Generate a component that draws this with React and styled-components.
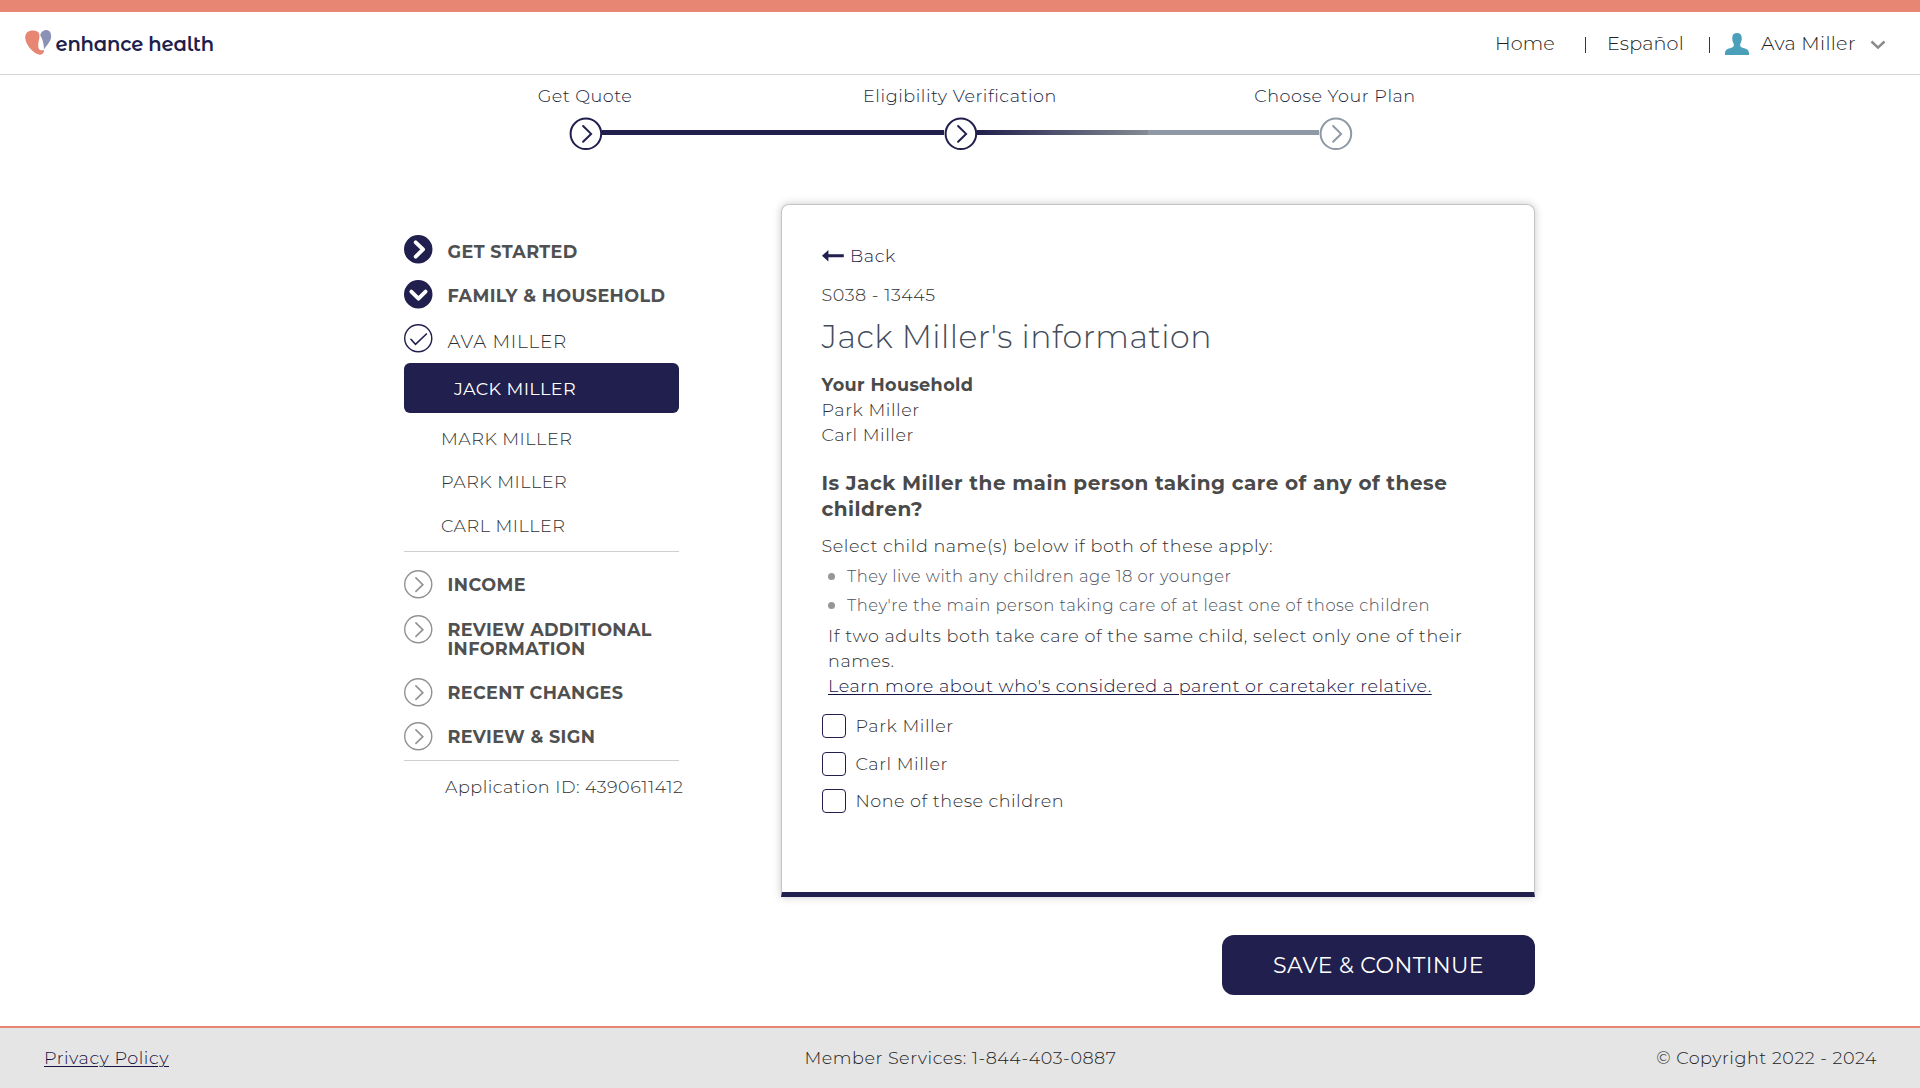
import React from "react";
import styled, { createGlobalStyle } from "styled-components";

const navy = "#211f4d";
const slate = "#8e99a5";

const GlobalStyle = createGlobalStyle`
  * { box-sizing: border-box; }
  body { margin: 0; background: #fff; font-family: Montserrat, Inter, "Open Sans", sans-serif; }
  svg { display: block; flex: none; overflow: visible; }
`;

const Page = styled.div`
  display: flex;
  flex-direction: column;
  min-height: 1088px;
`;

const Text = styled.div`
  font-size: ${(p) => p.$size || 17.6}px;
  font-weight: ${(p) => p.$weight || 300};
  letter-spacing: ${(p) => p.$track ?? 0.55}px;
  line-height: ${(p) => p.$line || 25}px;
  color: ${(p) => p.$color || "#303030"};
  white-space: nowrap;
`;

const TopBar = styled.div`
  height: 12px;
  background: #e78672;
`;

const Header = styled.header`
  height: 63px;
  display: flex;
  align-items: center;
  justify-content: space-between;
  padding: 1px 34px 0 25px;
  border-bottom: 1px solid #d8d8d8;
`;

const Brand = styled.div`
  display: flex;
  align-items: center;
  gap: 3.5px;
  padding-bottom: 1px;
`;

const BrandName = styled(Text)`
  font-family: "Montserrat Alternates", Montserrat, Inter, sans-serif;
  padding-top: 3px;
`;

const Nav = styled.nav`
  display: grid;
  grid-template-columns: 90px 22px 102px 16px 36px 109px 16px;
  align-items: center;
`;

const Pipe = styled.span`
  width: 1px;
  height: 16px;
  margin-top: 3px;
  background: #3a3050;
`;

const Stepper = styled.section`
  padding-top: 8px;
  display: flex;
  flex-direction: column;
  align-items: center;
  gap: 8px;
`;

const StepLabels = styled.div`
  display: grid;
  grid-template-columns: repeat(3, 375px);
  justify-items: center;
`;

const Track = styled.div`
  display: flex;
  align-items: flex-start;
  padding-left: 1px;
`;

const Segment = styled.div`
  width: 342px;
  height: 5px;
  margin-top: 13px;
  background: ${(p) => p.$fill};
`;

const Main = styled.main`
  display: flex;
  gap: 102px;
  padding: 54px 0 0 404px;
`;

const Sidebar = styled.aside`
  width: 275px;
  padding-top: 31px;
`;

const SideRow = styled.div`
  display: flex;
  align-items: flex-start;
  gap: 15px;
  height: ${(p) => p.$height}px;
`;

const SideLabel = styled(Text)`
  padding-top: ${(p) => p.$drop}px;
`;

const ActivePerson = styled.div`
  height: 50px;
  padding: 1px 0 0 50px;
  margin-bottom: 4px;
  border-radius: 6px;
  background: ${navy};
  display: flex;
  align-items: center;
`;

const Person = styled(Text)`
  padding-left: 37px;
`;

const Divider = styled.div`
  height: 1px;
  margin: ${(p) => p.$margin};
  background: #cfcfcf;
`;

const ApplicationId = styled(Text)`
  padding-left: 41px;
`;

const Content = styled.div`
  width: 754px;
  display: flex;
  flex-direction: column;
  align-items: flex-end;
  gap: 38px;
`;

const Card = styled.section`
  width: 100%;
  height: 693px;
  padding: 38px 40px 0;
  border: 1px solid #c4c4c4;
  border-bottom: 5px solid ${navy};
  border-radius: 8px 8px 0 0;
  box-shadow: 0 0 8px rgba(0, 0, 0, 0.22);
`;

const Back = styled.div`
  display: flex;
  align-items: center;
  gap: 6px;
`;

const CardText = styled(Text)`
  margin: ${(p) => p.$top || 0}px 0 0 ${(p) => p.$indent || -0.5}px;
`;

const LinkText = styled(CardText)`
  text-decoration: underline;
  text-underline-offset: 2px;
  text-decoration-thickness: 1px;
`;

const List = styled.ul`
  list-style: none;
  margin: 4px 0 3px;
  padding: 0 0 0 6px;
`;

const ListItem = styled.li`
  display: flex;
  align-items: center;
  gap: 12px;
  height: 29px;
`;

const Bullet = styled.span`
  width: 7px;
  height: 7px;
  border-radius: 50%;
  background: #969696;
`;

const Options = styled.div`
  display: flex;
  flex-direction: column;
  gap: 13.5px;
  margin-top: 16px;
`;

const Option = styled.label`
  display: flex;
  align-items: center;
  gap: 9.5px;
  height: 24px;
`;

const OptionText = styled(Text)`
  padding-bottom: 1px;
`;

const Checkbox = styled.span`
  width: 24px;
  height: 24px;
  border: 1px solid ${navy};
  border-radius: 4px;
`;

const SaveButton = styled.button`
  width: 313px;
  height: 60px;
  border: 0;
  padding: 0;
  border-radius: 12px;
  background: ${navy};
  font-family: inherit;
  display: flex;
  align-items: center;
  justify-content: center;
`;

const Footer = styled.footer`
  height: 62px;
  margin-top: 31px;
  padding: 0 43px 1px 44px;
  border-top: 2px solid #e78672;
  background: #e5e5e5;
  display: grid;
  grid-template-columns: 1fr auto 1fr;
  align-items: center;
`;

const FooterText = styled(Text)`
  justify-self: ${(p) => p.$side || "start"};
  text-decoration: ${(p) => (p.$link ? "underline" : "none")};
  text-underline-offset: 2px;
  text-decoration-thickness: 1px;
`;

const HeartLogo = () => (
  <svg width="27" height="26" viewBox="0 0 27 26">
    <path fill="#e78672" d="M.2 8C0 2.600 3.600.3 8.600.5c3.800.1 6 2.200 5.900 5.600-.1 3.400-1.800 7.600-1.200 11 .4 2.400 1.600 3.300 3 3.200 1.300 0 2.200-.6 2.800-.3-.1 2.900-1.700 5-4.400 4.700C8.300 24 .6 14.500.2 8Z" />
    <path fill="#8b90b7" d="M15.300 5.600C15.600 2.400 18.300.1 21.500.1c3.400.1 5.100 3.500 4.600 7.500-.7 4.800-4.700 7.700-7.100 12.200C19 14 17.600 9 15.300 5.600Z" />
  </svg>
);

const Avatar = () => (
  <svg width="24" height="22" viewBox="0 0 24 22">
    <path fill="#4a9fb9" d="M12 0c3 0 4.800 1.900 4.800 5.200 0 1.500-.3 3-.9 4.300-.5 1.200-.8 1.900-.7 3 .1 1.300 1 1.700 2.400 2.200 3.700 1.100 6.400 2 6.400 5.300V22H0v-2c0-3.300 2.700-4.200 6.400-5.300 1.400-.5 2.300-.9 2.400-2.200.1-1.100-.2-1.800-.7-3-.6-1.300-.9-2.800-.9-4.300C7.200 1.900 9 0 12 0Z" />
  </svg>
);

const CaretDown = () => (
  <svg width="16" height="8" viewBox="0 0 16 8">
    <path d="M1.500 1.500 8 7.600l6.500-6.100" fill="none" stroke="#8a8a8a" strokeWidth="2.500" />
  </svg>
);

const StepIcon = ({ color }) => (
  <svg width="33" height="33" viewBox="0 0 33 33" fill="none" stroke={color} strokeWidth="2">
    <circle cx="16.900" cy="16.800" r="15.300" />
    <path d="m14.100 9 8 7.900-8 7.900" strokeLinecap="round" />
  </svg>
);

const sideGlyphs = {
  next: "M11.500 7.200 18.700 14.200 11.500 21.200",
  open: "M7.200 11.400 14.200 18.300 21.200 11.400",
  done: "M6.800 15 11.300 20 22 9.800",
  idle: "M11.700 7.700 18.500 14.400 11.700 21",
};

const SideIcon = ({ kind }) => {
  const solid = kind === "next" || kind === "open";
  const line = kind === "idle" ? "#929292" : navy;
  return (
    <svg width="28.5" height="28.5" viewBox="0 0 28 28" fill="none">
      <circle cx="14" cy="14" r="13.300" stroke={line} strokeWidth="1.400" fill={solid ? navy : "none"} />
      <path
        d={sideGlyphs[kind]}
        stroke={solid ? "#fff" : line}
        strokeWidth={solid ? 3.8 : 1.6}
        strokeLinecap="round"
        strokeLinejoin={solid ? "round" : "miter"}
      />
    </svg>
  );
};

const BackArrow = () => (
  <svg width="22" height="12" viewBox="0 0 22 12">
    <path fill={navy} d="M0 5.700 6.400 0v4.200h15.400v3H6.400v4.300Z" />
  </svg>
);

const bold = { $weight: 700, $line: 19, $color: "#505050", $track: 0.38 };

export default function App() {
  return (
    <Page>
      <GlobalStyle />
      <TopBar />
      <Header>
        <Brand>
          <HeartLogo />
          <BrandName $size={19.5} $weight={600} $track={-0.2} $color={navy}>enhance health</BrandName>
        </Brand>
        <Nav>
          <Text $size={19.2} $track={0.1} $color="#222">Home</Text>
          <Pipe />
          <Text $size={19.2} $track={0.15} $color="#222">Español</Text>
          <Pipe />
          <Avatar />
          <Text $size={19.2} $track={0.35} $color="#222">Ava Miller</Text>
          <CaretDown />
        </Nav>
      </Header>

      <Stepper>
        <StepLabels>
          <Text $line={26} $track={0.5} $color="#1a1f3d">Get Quote</Text>
          <Text $line={26} $track={0.54} $color="#1a1f3d">Eligibility Verification</Text>
          <Text $line={26} $track={0.54} $color="#1a1f3d">Choose Your Plan</Text>
        </StepLabels>
        <Track>
          <StepIcon color={navy} />
          <Segment $fill={navy} />
          <StepIcon color={navy} />
          <Segment $fill={`linear-gradient(90deg, ${navy} 0%, #848b93 50%, ${slate} 50%)`} />
          <StepIcon color={slate} />
        </Track>
      </Stepper>

      <Main>
        <Sidebar>
          <SideRow $height={45}>
            <SideIcon kind="next" />
            <SideLabel {...bold} $drop={7}>GET STARTED</SideLabel>
          </SideRow>
          <SideRow $height={44}>
            <SideIcon kind="open" />
            <SideLabel {...bold} $drop={6}>FAMILY &amp; HOUSEHOLD</SideLabel>
          </SideRow>
          <SideRow $height={39}>
            <SideIcon kind="done" />
            <SideLabel $size={18.4} $line={19} $drop={7.5} $track={0.75}>AVA MILLER</SideLabel>
          </SideRow>
          <ActivePerson>
            <Text $weight={400} $color="#fff" $track={0.38}>JACK MILLER</Text>
          </ActivePerson>
          <Person $line={43} $track={0.5}>MARK MILLER</Person>
          <Person $line={43} $track={0.5}>PARK MILLER</Person>
          <Person $line={45} $track={0.5}>CARL MILLER</Person>
          <Divider $margin="3px 0 18px" />
          <SideRow $height={45}>
            <SideIcon kind="idle" />
            <SideLabel {...bold} $drop={5} $track={0.5}>INCOME</SideLabel>
          </SideRow>
          <SideRow $height={63}>
            <SideIcon kind="idle" />
            <SideLabel {...bold} $drop={5} $track={0.34}>REVIEW ADDITIONAL<br />INFORMATION</SideLabel>
          </SideRow>
          <SideRow $height={44}>
            <SideIcon kind="idle" />
            <SideLabel {...bold} $drop={5}>RECENT CHANGES</SideLabel>
          </SideRow>
          <SideRow $height={38}>
            <SideIcon kind="idle" />
            <SideLabel {...bold} $drop={5}>REVIEW &amp; SIGN</SideLabel>
          </SideRow>
          <Divider $margin="0 0 13px" />
          <ApplicationId $line={26} $track={0.5}>Application ID: 4390611412</ApplicationId>
        </Sidebar>

        <Content>
          <Card>
            <Back>
              <BackArrow />
              <Text $track={0.6} $color="#1b1945">Back</Text>
            </Back>
            <CardText $top={14} $track={0.55}>S038 - 13445</CardText>
            <CardText $top={10} $size={31.6} $line={40} $track={0.48} $color="#434c5a">Jack Miller's information</CardText>
            <CardText $top={15} $weight={700} $track={0.38} $color="#4a4a4a">Your Household</CardText>
            <CardText>Park Miller</CardText>
            <CardText>Carl Miller</CardText>
            <CardText $top={23} $size={20} $weight={700} $line={26} $track={0.48} $color="#4a4a4a">
              Is Jack Miller the main person taking care of any of these<br />children?
            </CardText>
            <CardText $top={11}>Select child name(s) below if both of these apply:</CardText>
            <List>
              <ListItem>
                <Bullet />
                <Text $size={16.4} $track={0.51} $color="#4e515d">They live with any children age 18 or younger</Text>
              </ListItem>
              <ListItem>
                <Bullet />
                <Text $size={16.4} $track={0.5} $color="#4e515d">They're the main person taking care of at least one of those children</Text>
              </ListItem>
            </List>
            <CardText $indent={6}>
              If two adults both take care of the same child, select only one of their<br />names.
            </CardText>
            <LinkText $indent={6} $track={0.53} $color="#151341">
              Learn more about who's considered a parent or caretaker relative.
            </LinkText>
            <Options>
              <Option><Checkbox /><OptionText>Park Miller</OptionText></Option>
              <Option><Checkbox /><OptionText>Carl Miller</OptionText></Option>
              <Option><Checkbox /><OptionText $track={0.5}>None of these children</OptionText></Option>
            </Options>
          </Card>
          <SaveButton type="button">
            <Text $size={22} $weight={400} $color="#fff" $track={0.4}>SAVE &amp; CONTINUE</Text>
          </SaveButton>
        </Content>
      </Main>

      <Footer>
        <FooterText $link $track={0.53} $color="#151341">Privacy Policy</FooterText>
        <FooterText $side="center" $track={0.5} $color="#222">Member Services: 1-844-403-0887</FooterText>
        <FooterText $side="end" $track={0.52} $color="#222">© Copyright 2022 - 2024</FooterText>
      </Footer>
    </Page>
  );
}
